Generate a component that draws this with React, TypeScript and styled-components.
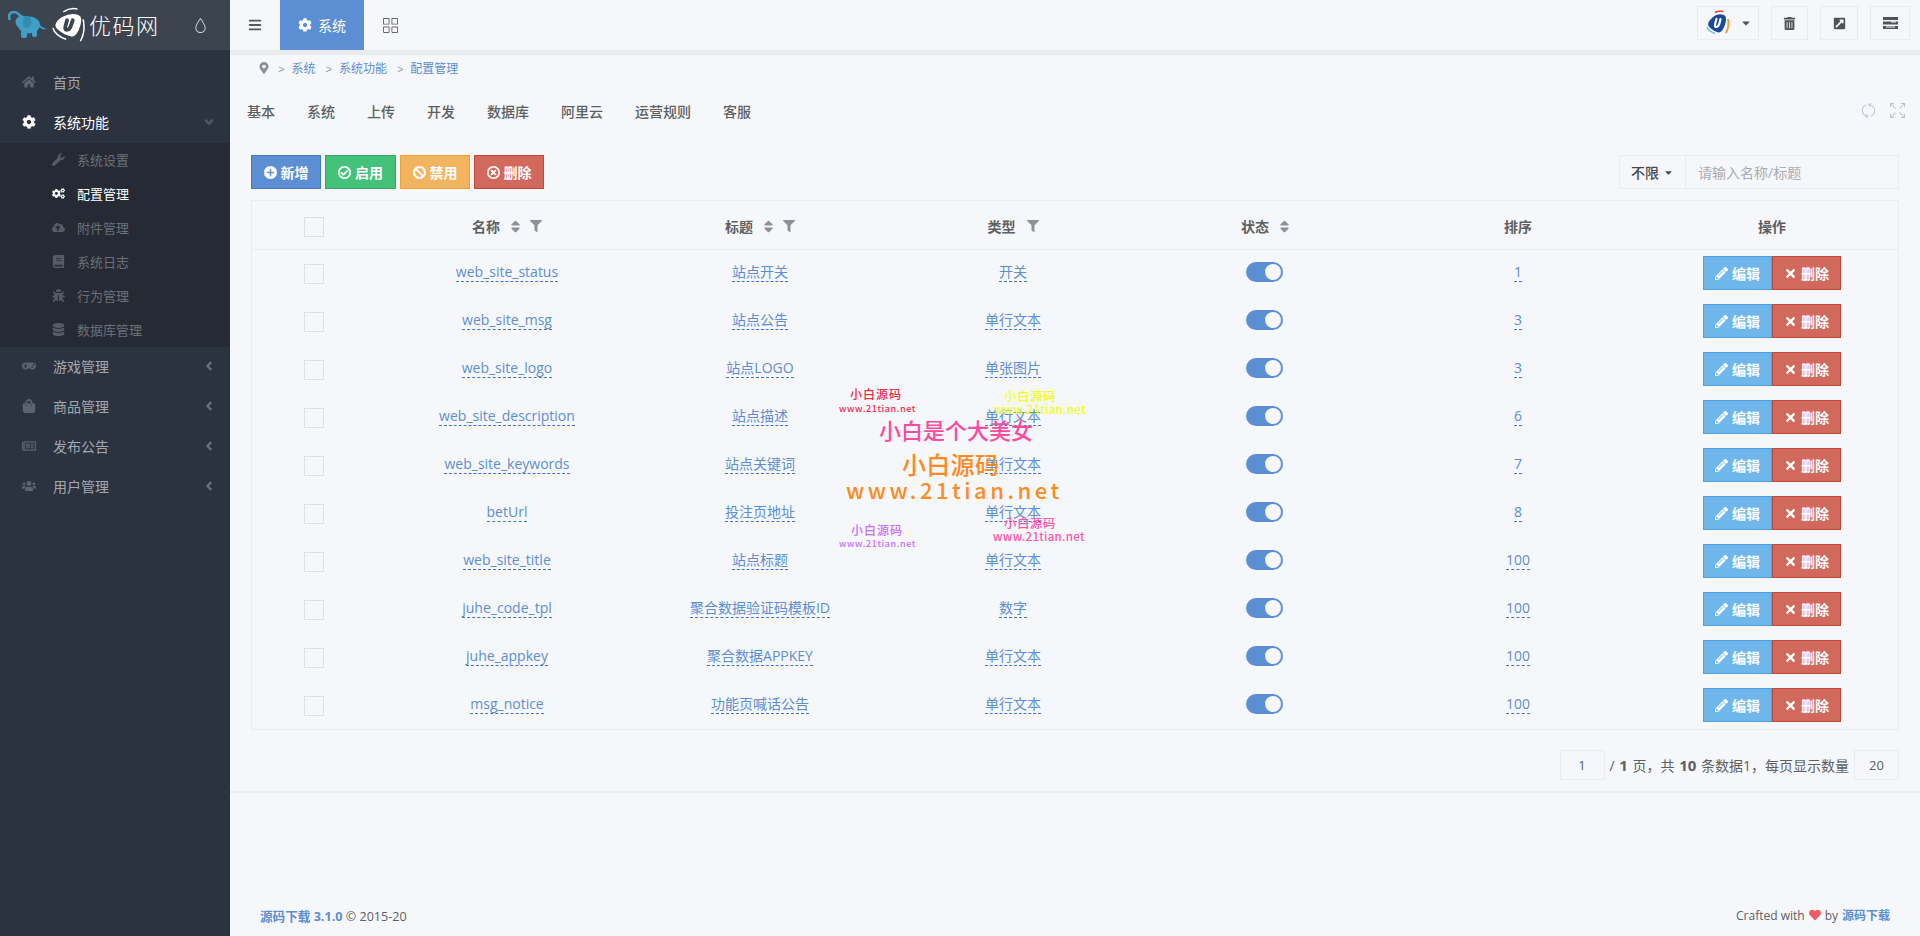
import { ReactNode } from "react";
import styled, { createGlobalStyle } from "styled-components";
import {
  FaAngleDown,
  FaAngleLeft,
  FaBan,
  FaBars,
  FaBook,
  FaBug,
  FaCaretDown,
  FaCloudUploadAlt,
  FaCog,
  FaCogs,
  FaDatabase,
  FaExternalLinkSquareAlt,
  FaFilter,
  FaGamepad,
  FaHeart,
  FaHome,
  FaMapMarkerAlt,
  FaPencilAlt,
  FaPlusCircle,
  FaRegCheckCircle,
  FaRegNewspaper,
  FaRegTimesCircle,
  FaShoppingBag,
  FaSort,
  FaTimes,
  FaTrashAlt,
  FaUsers,
} from "react-icons/fa";
import { SlDrop, SlGrid, SlRefresh, SlSizeFullscreen } from "react-icons/sl";

const Colors = {
  Blue: "#5c8ed3",
  BlueDark: "#3d76c4",
  Text: "#5c5f63",
  Line: "#e9ebef",
  Page: "#f6f7fa",
};

const GlobalStyle = createGlobalStyle`
  html, body {
    margin: 0;
    padding: 0;
    background: ${Colors.Page};
    font-family: "Open Sans", "Noto Sans CJK SC", sans-serif;
    font-size: 14px;
    color: ${Colors.Text};
  }
  * { box-sizing: border-box; }
`;

function WrenchIcon() {
  return (
    <svg width="13" height="13" viewBox="0 0 16 16" fill="currentColor">
      <path d="M15.6 3.6c.3 1.6-.2 3.2-1.3 4.2-1.1 1-2.6 1.4-4 1L3.7 15.4c-.8.8-2.2.8-3 0s-.8-2.2 0-3l6.6-6.6c-.4-1.4 0-2.9 1-4C9.4.7 11 .2 12.6.5L9.7 3.4l.6 2.2 2.2.6z" />
    </svg>
  );
}

const subMenus = [
  { label: "系统设置", icon: <WrenchIcon /> },
  { label: "配置管理", icon: <FaCogs />, active: true },
  { label: "附件管理", icon: <FaCloudUploadAlt /> },
  { label: "系统日志", icon: <FaBook /> },
  { label: "行为管理", icon: <FaBug /> },
  { label: "数据库管理", icon: <FaDatabase /> },
];

const bottomMenus = [
  { label: "游戏管理", icon: <FaGamepad /> },
  { label: "商品管理", icon: <FaShoppingBag /> },
  { label: "发布公告", icon: <FaRegNewspaper /> },
  { label: "用户管理", icon: <FaUsers /> },
];

const tabs = ["基本", "系统", "上传", "开发", "数据库", "阿里云", "运营规则", "客服"];

const rows = [
  ["web_site_status", "站点开关", "开关", "1"],
  ["web_site_msg", "站点公告", "单行文本", "3"],
  ["web_site_logo", "站点LOGO", "单张图片", "3"],
  ["web_site_description", "站点描述", "单行文本", "6"],
  ["web_site_keywords", "站点关键词", "单行文本", "7"],
  ["betUrl", "投注页地址", "单行文本", "8"],
  ["web_site_title", "站点标题", "单行文本", "100"],
  ["juhe_code_tpl", "聚合数据验证码模板ID", "数字", "100"],
  ["juhe_appkey", "聚合数据APPKEY", "单行文本", "100"],
  ["msg_notice", "功能页喊话公告", "单行文本", "100"],
];

const marks = [
  { text: "小白源码", x: 850, y: 387, size: 12, spacing: 1, color: "#f02a4a" },
  { text: "www.21tian.net", x: 839, y: 404, size: 9, spacing: 0.6, color: "#f02a4a" },
  { text: "小白源码", x: 1004, y: 388, size: 12.5, spacing: 0.4, color: "#eeff22" },
  { text: "www.21tian.net", x: 994, y: 403, size: 11.5, spacing: 0.3, color: "#eeff22" },
  { text: "小白是个大美女", x: 879, y: 416, size: 22, spacing: 0, color: "#ff4aa0" },
  { text: "小白源码", x: 902, y: 450, size: 24, spacing: 0.3, color: "#ff8a20" },
  { text: "www.21tian.net", x: 846, y: 476, size: 22, spacing: 3.5, color: "#ff8a20" },
  { text: "小白源码", x: 851, y: 523, size: 12, spacing: 1, color: "#cc6cff" },
  { text: "www.21tian.net", x: 839, y: 539, size: 9, spacing: 0.6, color: "#cc6cff" },
  { text: "小白源码", x: 1004, y: 515, size: 12.5, spacing: 0.4, color: "#ff55b0" },
  { text: "www.21tian.net", x: 993, y: 530, size: 11.5, spacing: 0.3, color: "#ff55b0" },
];

const Cell = ({ children }: { children: ReactNode }) => (
  <td>
    <Editable>{children}</Editable>
  </td>
);

const App = () => {
  return (
    <Container>
      <GlobalStyle />
      <Sidebar>
        <LogoBar>
          <svg width="38" height="28" viewBox="0 0 38 28">
            <path fill="none" stroke="#3f9fc6" strokeWidth="2.6" strokeLinecap="round" d="M1.5 8C0 3 3 1 6 1c3 0 5 2 7.5 5" />
            <circle cx="14" cy="11" r="6.5" fill="#3f9fc6" />
            <ellipse cx="21" cy="14" rx="11" ry="8.5" fill="#3f9fc6" />
            <rect x="13" y="17" width="6" height="10" rx="2" fill="#3f9fc6" />
            <rect x="24" y="17" width="5" height="9" rx="2" fill="#3f9fc6" />
            <ellipse cx="19" cy="11" rx="4.5" ry="6" fill="#338cb2" />
            <path fill="none" stroke="#3f9fc6" strokeWidth="1.4" d="M31 14c2 3 4 4 6.5 3.5" />
          </svg>
          <BrandMark width="34" height="36" viewBox="0 0 36 38">
            <path
              fill="#fff"
              d="M18 8c5-1.5 10-.5 12 2 2 3 .5 10-2.5 16-2 4-5 6-8 5-5-1-12-5-15-9-2-3 0-6 3-9 3-2.5 7-4 10.5-5z"
            />
            <path fill="none" stroke="#fff" strokeWidth="1.6" d="M12 5c5-3.5 11-4 15-3M1 22c1 5 7 10 14 12M33 13c1.5 7 1 16-3 23" />
            <path fill="none" stroke="#3c4450" strokeWidth="4" strokeLinecap="round" d="M16 14c-1 3.5-2 6-2 8 0 3 3 3 5 0 1-2 2-5 3-8" />
          </BrandMark>
          <LogoText>优码网</LogoText>
          <DropIcon>
            <SlDrop />
          </DropIcon>
        </LogoBar>
        <Menu>
          <MenuItem>
            <MenuIcon>
              <FaHome />
            </MenuIcon>
            首页
          </MenuItem>
          <MenuItem $active>
            <MenuIcon $active>
              <FaCog />
            </MenuIcon>
            系统功能
            <MenuArrow $open>
              <FaAngleDown />
            </MenuArrow>
          </MenuItem>
          <SubMenu>
            {subMenus.map((item) => (
              <SubItem key={item.label} $active={item.active}>
                <SubIcon $active={item.active}>{item.icon}</SubIcon>
                {item.label}
              </SubItem>
            ))}
          </SubMenu>
          {bottomMenus.map((item) => (
            <MenuItem key={item.label}>
              <MenuIcon>{item.icon}</MenuIcon>
              {item.label}
              <MenuArrow>
                <FaAngleLeft />
              </MenuArrow>
            </MenuItem>
          ))}
        </Menu>
      </Sidebar>
      <Main>
        <TopBar>
          <Burger>
            <FaBars />
          </Burger>
          <TopTab>
            <FaCog />
            系统
          </TopTab>
          <GridButton>
            <SlGrid />
          </GridButton>
          <TopRight>
            <ToolButton $width={62}>
              <svg width="28" height="28" viewBox="0 0 28 28">
                <path fill="#1b4a9c" d="M12 6c4-1.5 8-1 9.5 1.5 1.5 3-.5 10-3 13.5-1.5 2-3.5 3-5.5 2-3-1-7-3.5-8.5-6-1-2 0-4.5 2-6.5 1.5-1.5 3.5-3.5 5.5-4.5z" />
                <path fill="none" stroke="#fff" strokeWidth="2.2" strokeLinecap="round" d="M12.5 10c-1 3-1.5 5-1.5 6.5 0 2 2.5 2 3.5 0 1-1.5 1.5-4 2-6.5" />
                <path fill="none" stroke="#e8402e" strokeWidth="1.5" d="M11 3.5c3-1.5 6-1.5 8.5-1" />
                <path fill="none" stroke="#f59331" strokeWidth="1.8" d="M24 10c1 4 .5 9-2 14" />
                <path fill="none" stroke="#7cc6ea" strokeWidth="1.8" d="M3 18c1 3 4 5 8 6.5" />
              </svg>
              <CaretWrap>
                <FaCaretDown />
              </CaretWrap>
            </ToolButton>
            <ToolButton $width={37}>
              <FaTrashAlt />
            </ToolButton>
            <ToolButton $width={38}>
              <FaExternalLinkSquareAlt />
            </ToolButton>
            <ToolButton $width={40}>
              <svg width="15" height="12" viewBox="0 0 15 12" fill="#4f5358">
                <rect width="15" height="3" />
                <rect y="4.5" width="15" height="3" />
                <rect y="9" width="15" height="3" />
                <rect x="8" y="4.5" width="5" height="1" fill="#f6f7fa" />
                <rect x="3" y="9.5" width="9" height="1" fill="#f6f7fa" />
              </svg>
            </ToolButton>
          </TopRight>
        </TopBar>
        <Breadcrumb>
          <MarkerIcon>
            <FaMapMarkerAlt />
          </MarkerIcon>
          <Crumb>系统</Crumb>
          <Crumb>系统功能</Crumb>
          <Crumb>配置管理</Crumb>
        </Breadcrumb>
        <TabBar>
          {tabs.map((tab) => (
            <Tab key={tab}>{tab}</Tab>
          ))}
          <TabTools>
            <SlRefresh />
            <SlSizeFullscreen />
          </TabTools>
        </TabBar>
        <Toolbar>
          <ActionButton $bg={Colors.Blue} $border={Colors.BlueDark} $width={70}>
            <FaPlusCircle />
            新增
          </ActionButton>
          <ActionButton $bg="#44c27a" $border="#37a566" $width={71}>
            <FaRegCheckCircle />
            启用
          </ActionButton>
          <ActionButton $bg="#f3b45f" $border="#f0a030" $width={70}>
            <FaBan />
            禁用
          </ActionButton>
          <ActionButton $bg="#d1695c" $border="#c2483a" $width={70}>
            <FaRegTimesCircle />
            删除
          </ActionButton>
          <SearchGroup>
            <SearchType>
              不限
              <FaCaretDown />
            </SearchType>
            <SearchInput placeholder="请输入名称/标题" />
          </SearchGroup>
        </Toolbar>
        <TableWrap>
          <Table>
            <colgroup>
              <col width={128} />
              <col width={254} />
              <col width={252} />
              <col width={254} />
              <col width={248} />
              <col width={260} />
              <col width={250} />
            </colgroup>
            <thead>
              <tr>
                <th>
                  <Check />
                </th>
                <th>
                  <HeadLabel>
                    名称
                    <SortIcon />
                    <FilterIcon />
                  </HeadLabel>
                </th>
                <th>
                  <HeadLabel>
                    标题
                    <SortIcon />
                    <FilterIcon />
                  </HeadLabel>
                </th>
                <th>
                  <HeadLabel>
                    类型
                    <FilterIcon $gap={11} />
                  </HeadLabel>
                </th>
                <th>
                  <HeadLabel $shift={5}>
                    状态
                    <SortIcon />
                  </HeadLabel>
                </th>
                <th>排序</th>
                <th>
                  <HeadLabel $shift={-2}>操作</HeadLabel>
                </th>
              </tr>
            </thead>
            <tbody>
              {rows.map((row) => (
                <tr key={row[0]}>
                  <td>
                    <Check />
                  </td>
                  <Cell>{row[0]}</Cell>
                  <Cell>{row[1]}</Cell>
                  <Cell>{row[2]}</Cell>
                  <td>
                    <Toggle />
                  </td>
                  <Cell>{row[3]}</Cell>
                  <td>
                    <RowActions>
                      <RowButton $bg="#6fb7ea" $border="#4ba3e3">
                        <FaPencilAlt />
                        编辑
                      </RowButton>
                      <RowButton $bg="#d1695c" $border="#c2483a">
                        <FaTimes />
                        删除
                      </RowButton>
                    </RowActions>
                  </td>
                </tr>
              ))}
            </tbody>
          </Table>
        </TableWrap>
        <Pager>
          <PageBox>1</PageBox>
          <PagerText>
            / <b>1</b> 页，共 <b>10</b> 条数据1，每页显示数量
          </PagerText>
          <PageBox>20</PageBox>
        </Pager>
        <Divider />
        <Footer>
          <FooterLeft>
            <FooterLink>源码下载 3.1.0</FooterLink> © 2015-20
          </FooterLeft>
          <FooterRight>
            Crafted with <FaHeart /> by <FooterLink>源码下载</FooterLink>
          </FooterRight>
        </Footer>
      </Main>
      <Watermark>
        {marks.map((mark) => (
          <Mark
            key={`${mark.text}-${mark.x}-${mark.y}`}
            $x={mark.x}
            $y={mark.y}
            $size={mark.size}
            $spacing={mark.spacing}
            $color={mark.color}
          >
            {mark.text}
          </Mark>
        ))}
      </Watermark>
    </Container>
  );
};

const Container = styled.div`
  display: flex;
  position: relative;
  width: 100%;
  height: 936px;
  overflow: hidden;
`;

const Sidebar = styled.aside`
  width: 230px;
  flex: none;
  background: #2c3340;
`;

const LogoBar = styled.div`
  display: flex;
  align-items: center;
  height: 50px;
  padding-left: 8px;
  background: #3c4450;
`;

const BrandMark = styled.svg`
  margin-left: 6px;
`;

const LogoText = styled.span`
  margin-left: 3px;
  font-size: 22px;
  font-weight: 300;
  letter-spacing: 1.5px;
  line-height: 1;
  color: #fff;
`;

const DropIcon = styled.span`
  display: flex;
  margin-left: auto;
  margin-right: 22px;
  font-size: 15px;
  color: #c8d2de;
`;

const Menu = styled.nav`
  padding-top: 13px;
`;

const MenuItem = styled.div<{ $active?: boolean }>`
  display: flex;
  align-items: center;
  height: 40px;
  padding: 0 14px 2px 21px;
  font-size: 14px;
  color: ${({ $active }) => ($active ? "#fff" : "#a4a8ae")};
`;

const MenuIcon = styled.span<{ $active?: boolean }>`
  display: flex;
  justify-content: center;
  width: 16px;
  margin-right: 16px;
  font-size: 14px;
  color: ${({ $active }) => ($active ? "#fff" : "#5a6474")};
`;

const MenuArrow = styled.span<{ $open?: boolean }>`
  display: flex;
  margin-left: auto;
  font-size: 14px;
  color: ${({ $open }) => ($open ? "#525a68" : "#6d7480")};
`;

const SubMenu = styled.div`
  background: #252a35;
`;

const SubItem = styled.div<{ $active?: boolean }>`
  display: flex;
  align-items: center;
  height: 34px;
  padding: 0 0 2px 51px;
  font-size: 13px;
  color: ${({ $active }) => ($active ? "#fff" : "#6c7077")};
`;

const SubIcon = styled.span<{ $active?: boolean }>`
  display: flex;
  justify-content: center;
  width: 14px;
  margin-right: 12px;
  font-size: 13px;
  color: ${({ $active }) => ($active ? "#fff" : "#555c68")};
`;

const Main = styled.main`
  display: flex;
  flex-direction: column;
  flex: 1;
  min-width: 0;
`;

const TopBar = styled.header`
  display: flex;
  align-items: center;
  flex: none;
  height: 55px;
  padding-right: 10px;
  border-bottom: 5px solid ${Colors.Line};
`;

const Burger = styled.span`
  display: flex;
  width: 50px;
  justify-content: center;
  font-size: 14px;
  color: #55585c;
`;

const TopTab = styled.div`
  display: flex;
  align-items: center;
  justify-content: center;
  gap: 6px;
  width: 84px;
  height: 50px;
  background: ${Colors.Blue};
  color: #fff;
  font-size: 14px;
`;

const GridButton = styled.span`
  display: flex;
  margin-left: 19px;
  font-size: 15px;
  color: #666;
`;

const TopRight = styled.div`
  display: flex;
  gap: 12px;
  align-self: flex-start;
  margin: 6px 0 0 auto;
`;

const ToolButton = styled.div<{ $width: number }>`
  display: flex;
  align-items: center;
  justify-content: center;
  width: ${({ $width }) => $width}px;
  height: 34px;
  border: 1px solid ${Colors.Line};
  font-size: 13px;
  color: #4f5358;
`;

const CaretWrap = styled.span`
  display: flex;
  margin-left: 8px;
  font-size: 12px;
`;

const Breadcrumb = styled.div`
  display: flex;
  align-items: center;
  height: 26px;
  padding-left: 28px;
  font-size: 12px;
`;

const MarkerIcon = styled.span`
  display: flex;
  margin-right: -2px;
  font-size: 12px;
  color: #8b9097;
`;

const Crumb = styled.span`
  margin-left: 10px;
  color: ${Colors.Blue};

  &::before {
    content: ">";
    margin-right: 7px;
    color: #9a9ea5;
    font-family: "Liberation Sans", sans-serif;
    font-size: 11px;
  }
`;

const TabBar = styled.div`
  display: flex;
  align-items: center;
  height: 59px;
  padding: 0 15px 0 17px;
`;

const Tab = styled.span`
  margin-right: 32px;
  font-size: 14px;
  font-weight: 500;
  color: #5c5f63;
`;

const TabTools = styled.span`
  display: flex;
  gap: 14px;
  margin-left: auto;
  font-size: 15px;
  color: #b9bfcc;
`;

const Toolbar = styled.div`
  display: flex;
  gap: 4px;
  margin-top: 15px;
  padding: 0 21px;
`;

const ActionButton = styled.div<{ $bg: string; $border: string; $width: number }>`
  display: flex;
  align-items: center;
  justify-content: center;
  gap: 4px;
  width: ${({ $width }) => $width}px;
  height: 34px;
  background: ${({ $bg }) => $bg};
  border: 1px solid ${({ $border }) => $border};
  color: #fff;
  font-size: 14px;
  font-weight: 700;

  svg {
    font-size: 13px;
    stroke: #fff;
    stroke-width: 22;
  }
`;

const SearchGroup = styled.div`
  display: flex;
  margin-left: auto;
  height: 34px;
`;

const SearchType = styled.div`
  display: flex;
  align-items: center;
  justify-content: center;
  gap: 4px;
  width: 67px;
  border: 1px solid ${Colors.Line};
  font-size: 14px;
  font-weight: 500;
  color: #45484c;

  svg {
    font-size: 11px;
  }
`;

const SearchInput = styled.input`
  width: 213px;
  padding: 0 12px;
  border: 1px solid ${Colors.Line};
  border-left: none;
  background: transparent;
  font-family: inherit;
  font-size: 14px;
  outline: none;

  &::placeholder {
    color: #a9acb1;
  }
`;

const TableWrap = styled.div`
  margin: 11px 21px 0;
  border: 1px solid ${Colors.Line};
`;

const Table = styled.table`
  width: 100%;
  table-layout: fixed;
  border-collapse: collapse;

  th {
    height: 48px;
    padding: 3px 0 0;
    border-bottom: 1px solid ${Colors.Line};
    font-size: 14px;
    font-weight: 700;
    color: #5c5f63;
    text-align: center;
  }

  td {
    height: 48px;
    padding: 0;
    text-align: center;
    font-size: 14px;
  }
`;

const HeadLabel = styled.span<{ $shift?: number }>`
  display: inline-flex;
  align-items: center;
  margin-left: ${({ $shift }) => $shift ?? 0}px;
`;

const SortIcon = styled(FaSort)`
  margin-left: 8px;
  font-size: 15px;
  color: #8d9197;
`;

const FilterIcon = styled(FaFilter)<{ $gap?: number }>`
  margin-left: ${({ $gap }) => $gap ?? 7}px;
  font-size: 12px;
  color: #8d9197;
`;

const Check = styled.span`
  display: inline-block;
  width: 20px;
  height: 20px;
  margin-right: 5px;
  border: 1px solid #dcdfe3;
  vertical-align: middle;
`;

const Editable = styled.span`
  display: inline-block;
  margin-bottom: 3px;
  line-height: 19px;
  vertical-align: middle;
  color: ${Colors.Blue};
  border-bottom: 1px dashed ${Colors.BlueDark};
`;

const Toggle = styled.span`
  display: inline-block;
  position: relative;
  width: 37px;
  height: 20px;
  margin-bottom: 2px;
  border-radius: 10px;
  background: ${Colors.Blue};
  vertical-align: middle;

  &::after {
    content: "";
    position: absolute;
    top: 2px;
    right: 2px;
    width: 16px;
    height: 16px;
    border-radius: 50%;
    background: ${Colors.Page};
  }
`;

const RowActions = styled.div`
  display: inline-flex;
  margin-right: 2px;
  vertical-align: middle;
`;

const RowButton = styled.div<{ $bg: string; $border: string }>`
  display: flex;
  align-items: center;
  justify-content: center;
  gap: 4px;
  width: 69px;
  height: 34px;
  background: ${({ $bg }) => $bg};
  border: 1px solid ${({ $border }) => $border};
  color: #fff;
  font-size: 14px;
  font-weight: 700;

  svg {
    font-size: 13px;
  }
`;

const Pager = styled.div`
  display: flex;
  align-items: center;
  justify-content: flex-end;
  margin-top: 20px;
  padding: 0 21px;
`;

const PageBox = styled.div`
  display: flex;
  align-items: center;
  justify-content: center;
  width: 45px;
  height: 30px;
  border: 1px solid ${Colors.Line};
  border-radius: 2px;
  font-size: 13px;
`;

const PagerText = styled.span`
  margin: 0 5px;
  font-size: 14px;
  word-spacing: 1px;
  color: #5c5f63;

  b {
    font-size: 15px;
  }
`;

const Divider = styled.div`
  height: 2px;
  margin-top: 11px;
  background: ${Colors.Line};
`;

const Footer = styled.footer`
  display: flex;
  justify-content: space-between;
  align-items: center;
  margin-top: auto;
  height: 40px;
  margin-bottom: 1px;
  padding: 0 30px;
  font-size: 12px;
  color: #5c5f63;
`;

const FooterLeft = styled.span`
  font-size: 12.6px;
`;

const FooterRight = styled.span`
  display: inline-flex;
  align-items: center;
  gap: 4px;

  svg {
    color: #f05a63;
    font-size: 12px;
  }
`;

const FooterLink = styled.b`
  color: ${Colors.Blue};
`;

const Watermark = styled.div`
  position: absolute;
  inset: 0;
  pointer-events: none;
`;

const Mark = styled.span<{ $x: number; $y: number; $size: number; $spacing: number; $color: string }>`
  position: absolute;
  left: ${({ $x }) => $x}px;
  top: ${({ $y }) => $y}px;
  font-family: "Noto Sans CJK SC", sans-serif;
  font-size: ${({ $size }) => $size}px;
  font-weight: 500;
  line-height: 1.2;
  letter-spacing: ${({ $spacing }) => $spacing}px;
  white-space: nowrap;
  color: ${({ $color }) => $color};
`;

export default App;
